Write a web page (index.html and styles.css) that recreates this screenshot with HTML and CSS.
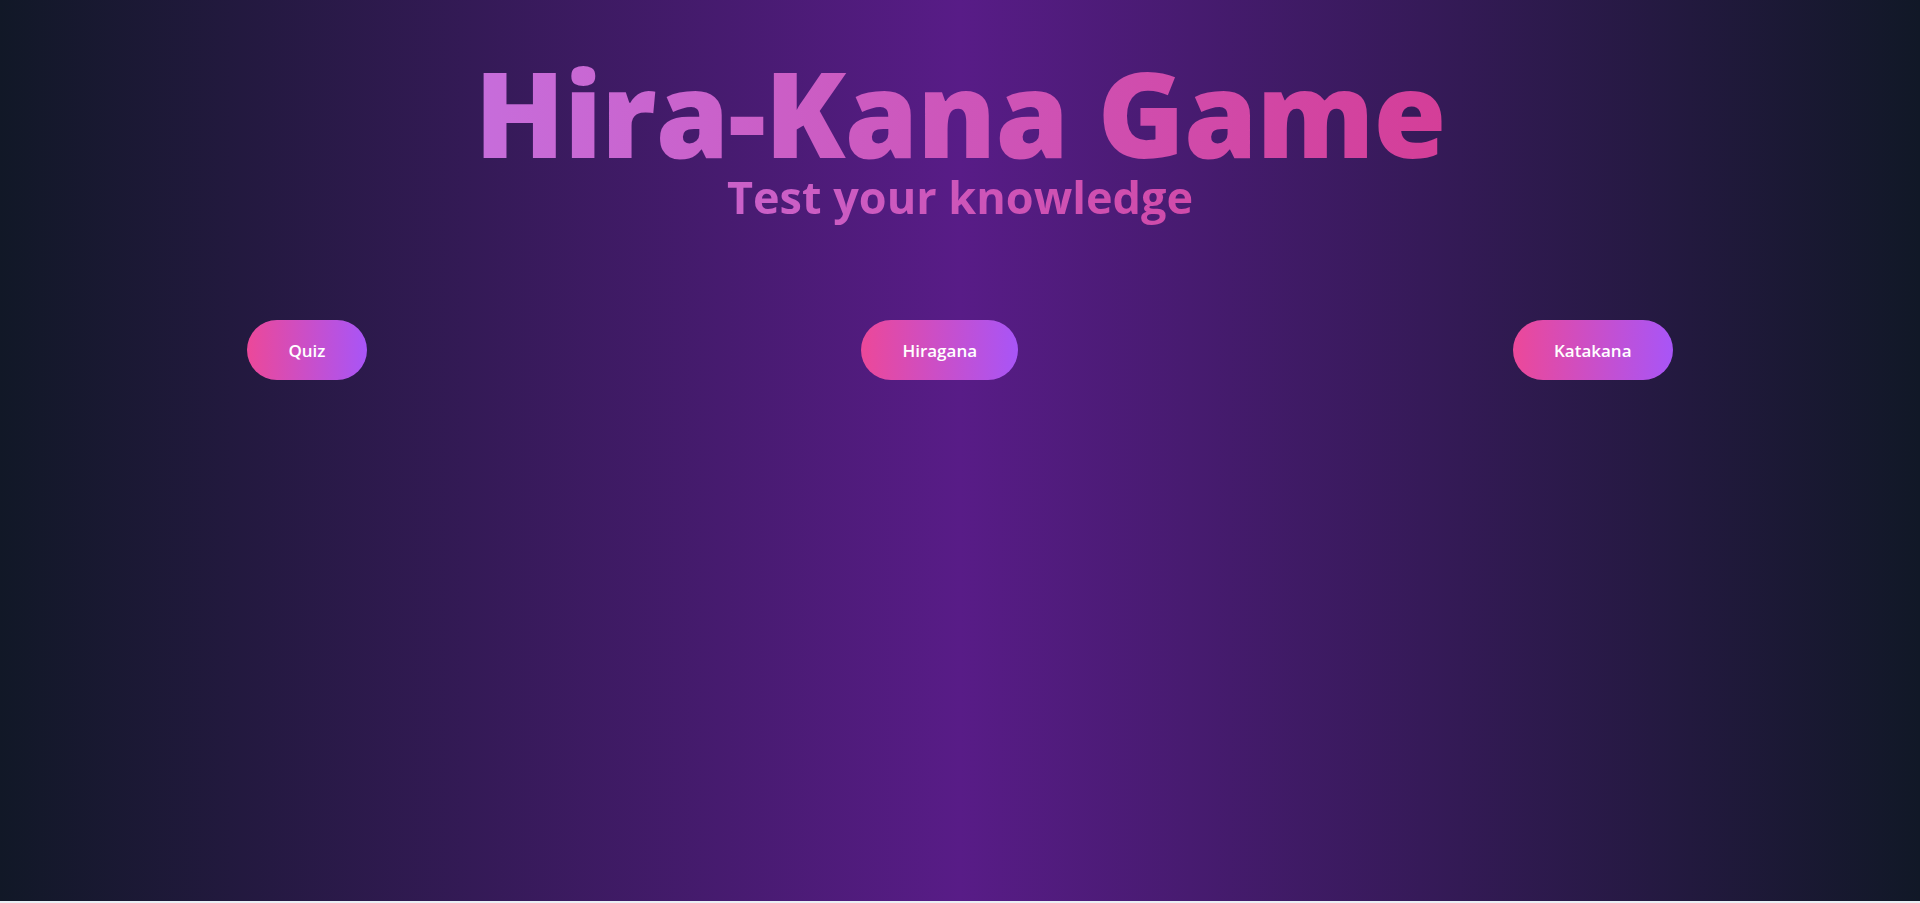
FILE: index.html
```html
<!DOCTYPE html>
<html lang="en">
<head>
<meta charset="utf-8">
<title>Hira-Kana Game</title>
<link rel="stylesheet" href="styles.css">
</head>
<body>
<div class="page">
  <header class="header">
    <h1 class="title">Hira-Kana Game</h1>
    <h2 class="subtitle">Test your knowledge</h2>
  </header>
  <nav class="menu">
    <button class="btn">Quiz</button>
    <button class="btn">Hiragana</button>
    <button class="btn">Katakana</button>
  </nav>
</div>
</body>
</html>
```

FILE: styles.css
```css
* { box-sizing: border-box; }
html, body { margin: 0; padding: 0; }
body {
  background: #e9eff4;
  font-family: "Open Sans", "Noto Sans", sans-serif;
  height: 903px;
  overflow: hidden;
}
.page {
  height: 901px;
  background: linear-gradient(to right, #111827, #581c87, #111827);
  padding-top: 61px;
}
.header { text-align: center; }
.title, .subtitle {
  margin: 0;
  background: linear-gradient(to right, #c084fc, #db2777);
  -webkit-background-clip: text;
  background-clip: text;
  color: transparent;
  -webkit-text-fill-color: transparent;
}
.title {
  font-size: 118px;
  line-height: 104px;
  font-weight: 800;
  letter-spacing: -1px;
}
.subtitle {
  font-size: 45px;
  line-height: 60px;
  padding-top: 2px;
  padding-bottom: 5px;
  font-weight: 700;
}
.menu {
  display: flex;
  justify-content: space-around;
  margin-top: 88px;
}
.btn {
  height: 60px;
  padding: 2px 41px 0;
  border: none;
  border-radius: 9999px;
  background: linear-gradient(to right, #ec4899, #a855f7);
  color: #fff;
  font-family: "Open Sans", "Noto Sans", sans-serif;
  font-size: 17px;
  font-weight: 600;
  line-height: 58px;
}
```
